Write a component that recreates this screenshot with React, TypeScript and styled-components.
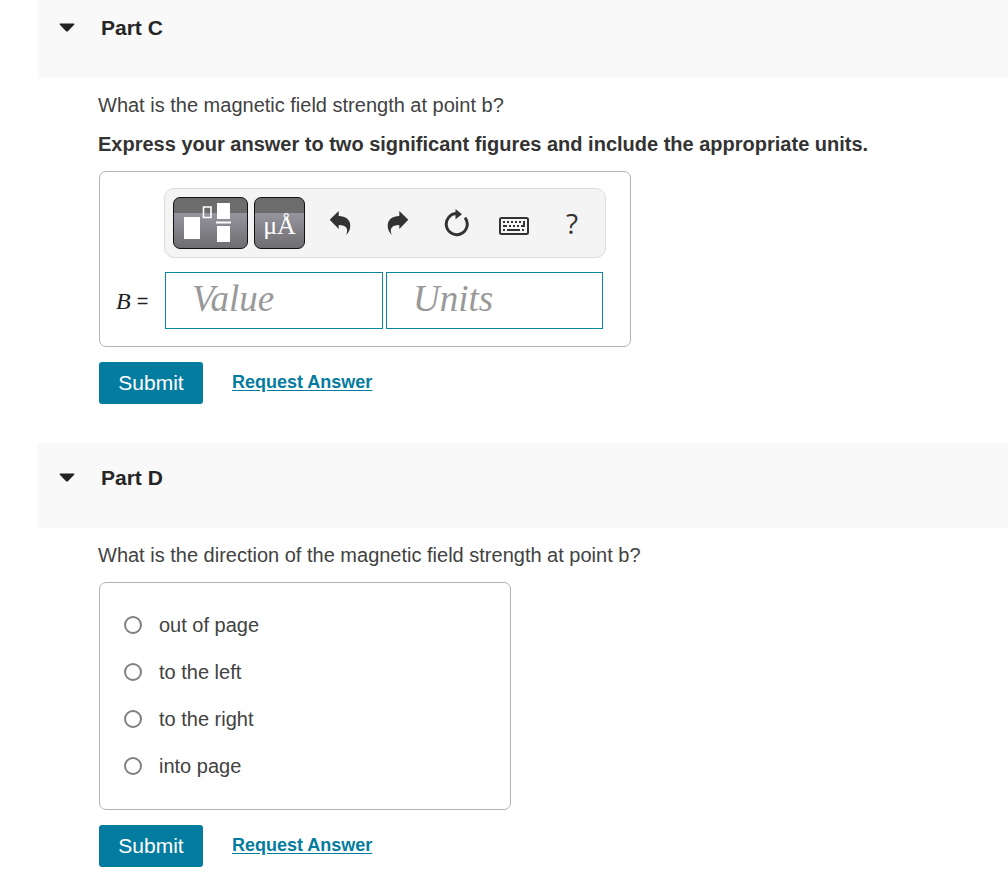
import React, { useState } from "react";
import styled, { createGlobalStyle } from "styled-components";

const GlobalStyle = createGlobalStyle`
  *, *::before, *::after { box-sizing: border-box; }
  body {
    margin: 0;
    background: #fff;
    color: #424242;
    font-family: "Liberation Sans", Arial, sans-serif;
    font-size: 20px;
    line-height: 24px;
  }
  button, input { font: inherit; color: inherit; margin: 0; }
`;

const Page = styled.main`
  padding-left: 38px;
`;

const Part = styled.section`
  padding-bottom: 39px;
`;

const PartHeader = styled.header<{ $first?: boolean }>`
  padding: ${(p) => (p.$first ? "16px" : "23px")} 20px 38px;
  background: #f9f9f9;
`;

const Toggle = styled.button`
  display: flex;
  align-items: center;
  gap: 25px;
  padding: 0;
  border: 0;
  background: none;
  cursor: pointer;
`;

const PartTitle = styled.h2`
  margin: 0;
  color: #262626;
  font-size: 21px;
  font-weight: bold;
  line-height: 24px;
`;

const PartBody = styled.div`
  display: flex;
  flex-direction: column;
  align-items: flex-start;
  gap: 15px;
  padding: 15px 20px 0 60px;
`;

const Text = styled.p<{ $strong?: boolean }>`
  margin: 0;
  color: ${(p) => (p.$strong ? "#333" : "#424242")};
  font-weight: ${(p) => (p.$strong ? "bold" : "normal")};
`;

const AnswerCard = styled.div`
  margin-left: 1px;
  padding: 16px 24px 17px 16px;
  border: 1px solid #b3b3b3;
  border-radius: 7px;
`;

const Toolbar = styled.div`
  display: flex;
  align-items: center;
  width: 442px;
  max-width: 100%;
  height: 70px;
  margin-left: 48px;
  padding-left: 8px;
  border: 1px solid #dcdcdc;
  border-radius: 10px;
  background: #f4f4f4;
`;

const MathButton = styled.button<{ $width: number }>`
  display: flex;
  align-items: center;
  justify-content: center;
  width: ${(p) => p.$width}px;
  height: 52px;
  margin-right: 6px;
  padding: 0;
  border: 1px solid #111;
  border-radius: 7px;
  background: linear-gradient(#6c6c6c 0 15px, #96949e 15px, #6e6d70 100%);
  color: #fff;
  font-family: "Liberation Serif", "Times New Roman", serif;
  font-size: 26px;
  cursor: pointer;
`;

const SymbolButton = styled(MathButton)`
  padding-top: 6px;
`;

const ToolButton = styled.button`
  display: flex;
  align-items: center;
  justify-content: center;
  width: 58px;
  height: 50px;
  padding: 0;
  border: 0;
  background: none;
  color: #333;
  cursor: pointer;
`;

const HelpButton = styled(ToolButton)`
  font-family: "Open Sans", sans-serif;
  font-size: 28px;
  font-weight: 500;
`;

const EntryRow = styled.div`
  display: flex;
  align-items: center;
  margin-top: 14px;
`;

const VariableLabel = styled.label`
  display: flex;
  align-items: center;
  gap: 6px;
  width: 49px;
  color: #222;
  font-family: "Liberation Serif", "Times New Roman", serif;
  font-size: 24px;
`;

const Equals = styled.span`
  font-family: "Liberation Sans", Arial, sans-serif;
  font-size: 20px;
`;

const Entry = styled.input`
  width: 218px;
  height: 57px;
  margin-right: 3px;
  padding: 0 26px 4px;
  border: 1px solid #0a86a5;
  border-radius: 0;
  background: #fff;
  font-family: "Liberation Serif", "Times New Roman", serif;
  font-size: 37px;
  &::placeholder { color: #999; font-style: italic; opacity: 1; }
  &:last-child { width: 217px; }
`;

const ChoiceCard = styled.fieldset`
  display: flex;
  flex-direction: column;
  gap: 23px;
  width: 412px;
  max-width: 100%;
  min-width: 0;
  margin: 0 0 0 1px;
  padding: 30px 24px 31px;
  border: 1px solid #b3b3b3;
  border-radius: 7px;
`;

const Choice = styled.label`
  display: flex;
  align-items: center;
  gap: 17px;
  cursor: pointer;
`;

const Radio = styled.input`
  appearance: none;
  width: 18px;
  height: 18px;
  border: 2px solid #808080;
  border-radius: 50%;
  background: #fff;
  &:checked { border-color: #047c9f; box-shadow: inset 0 0 0 3px #fff; background: #047c9f; }
`;

const Actions = styled.div`
  display: flex;
  align-items: center;
  gap: 29px;
  margin-left: 1px;
`;

const SubmitButton = styled.button`
  width: 104px;
  height: 42px;
  padding: 0;
  border: 0;
  border-radius: 3px;
  background: #047c9f;
  color: #fff;
  font-size: 21px;
  cursor: pointer;
`;

const RequestLink = styled.a`
  padding-bottom: 2px;
  color: #047c9f;
  font-size: 18px;
  font-weight: bold;
  text-underline-offset: 2px;
`;

const Caret = () => (
  <svg width="18" height="12" viewBox="0 0 18 12" aria-hidden="true">
    <path d="M2.4 1.5h13.2q1.6 0 .5 1.2l-5.900 6.2q-1.2 1.2-2.4 0L1.9 2.700q-1.1-1.2.5-1.2z" fill="#222" />
  </svg>
);

const TemplatesIcon = () => (
  <svg width="54" height="42" viewBox="0 0 54 42" aria-hidden="true">
    <path d="M0 15h16v22H0zM33 1h13v16H33zM33 24h13v16H33zM32 19.500h15v2H32z" fill="#fff" />
    <path d="M19.500 5h7.500v10.500h-7.500z" fill="none" stroke="#fff" strokeWidth="1.6" />
  </svg>
);

const UndoIcon = ({ flip }: { flip?: boolean }) => (
  <svg width="22" height="24" viewBox="0 0 22 24" aria-hidden="true">
    <path
      transform={flip ? "translate(22 0) scale(-1 1)" : undefined}
      d="M.7 8.700 9.700 0v5C16.500 5.200 21.300 8.600 21.300 14.500c0 3.800-1.200 6.600-4.100 9.500 2.600-6.400.2-9.800-7.500-10v4z"
      fill="#333"
    />
  </svg>
);

const ResetIcon = () => (
  <svg width="26" height="28" viewBox="0 0 26 28" aria-hidden="true">
    <path d="M14 4.600A10.500 10.500 0 1 0 22 8.600" fill="none" stroke="#333" strokeWidth="3" />
    <path d="M12.500 0 19 5.200l-6.500 5z" fill="#333" />
  </svg>
);

const KeyboardIcon = () => (
  <svg width="30" height="24" viewBox="0 0 30 24" aria-hidden="true">
    <g transform="translate(0 6)">
      <rect x="1" y="1" width="28" height="16" rx="1.5" fill="none" stroke="#333" strokeWidth="2" />
      <path
        d="M4 4h2v2H4zM8 4h2v2H8zM12 4h2v2h-2zM16 4h2v2h-2zM20 4h2v2h-2zM24 4h2v6h-4V8h2zM4 8h4v2H4zM10 8h2v2h-2zM14 8h2v2h-2zM18 8h2v2h-2zM4 12h2v2H4zM8 12h13v2H8zM23 12h2v2h-2z"
        fill="#333"
      />
    </g>
  </svg>
);

function PartSection({ title, first, children }: { title: string; first?: boolean; children: React.ReactNode }) {
  const [open, setOpen] = useState(true);
  return (
    <Part>
      <PartHeader $first={first}>
        <Toggle aria-expanded={open} onClick={() => setOpen(!open)}>
          <Caret />
          <PartTitle>{title}</PartTitle>
        </Toggle>
      </PartHeader>
      {open && <PartBody>{children}</PartBody>}
    </Part>
  );
}

const SubmitRow = () => (
  <Actions>
    <SubmitButton>Submit</SubmitButton>
    <RequestLink href="#answer">Request Answer</RequestLink>
  </Actions>
);

const choices = ["out of page", "to the left", "to the right", "into page"];

export default function App() {
  return (
    <>
      <GlobalStyle />
      <Page>
        <PartSection title="Part C" first>
          <Text>What is the magnetic field strength at point b?</Text>
          <Text $strong>Express your answer to two significant figures and include the appropriate units.</Text>
          <AnswerCard>
            <Toolbar role="toolbar" aria-label="Math tools">
              <MathButton $width={75} aria-label="Templates"><TemplatesIcon /></MathButton>
              <SymbolButton $width={51} aria-label="Symbols">μÅ</SymbolButton>
              <ToolButton aria-label="Undo"><UndoIcon /></ToolButton>
              <ToolButton aria-label="Redo"><UndoIcon flip /></ToolButton>
              <ToolButton aria-label="Reset"><ResetIcon /></ToolButton>
              <ToolButton aria-label="Keyboard shortcuts"><KeyboardIcon /></ToolButton>
              <HelpButton aria-label="Help">?</HelpButton>
            </Toolbar>
            <EntryRow>
              <VariableLabel htmlFor="value"><i>B</i><Equals>=</Equals></VariableLabel>
              <Entry id="value" placeholder="Value" />
              <Entry aria-label="Units" placeholder="Units" />
            </EntryRow>
          </AnswerCard>
          <SubmitRow />
        </PartSection>
        <PartSection title="Part D">
          <Text>What is the direction of the magnetic field strength at point b?</Text>
          <ChoiceCard aria-label="Direction">
            {choices.map((choice) => (
              <Choice key={choice}>
                <Radio type="radio" name="direction" value={choice} />
                {choice}
              </Choice>
            ))}
          </ChoiceCard>
          <SubmitRow />
        </PartSection>
      </Page>
    </>
  );
}
